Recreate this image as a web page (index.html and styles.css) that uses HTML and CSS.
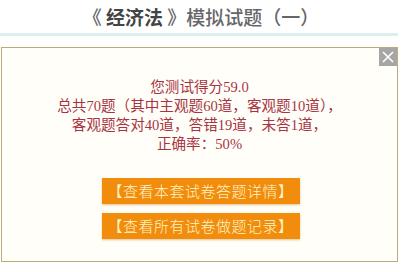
FILE: index.html
```html
<!DOCTYPE html>
<html>
<head>
  <meta charset="UTF-8" />
  <title>经济法模拟试题</title>
  <link rel="stylesheet" href="styles.css">
</head>
<body>
  <div class="page">
    <h1 class="title">《 <b>经济法</b> 》模拟试题（一）</h1>

    <div class="dialog">
      <span class="close">
        <svg width="14" height="14" viewBox="0 0 14 14">
          <path d="M2 2 L12 12 M12 2 L2 12" stroke="#fff" stroke-width="1.6" />
        </svg>
      </span>
      <div class="result">
        <p>您测试得分59.0</p>
        <p>总共70题（其中主观题60道，客观题10道），</p>
        <p>客观题答对40道，答错19道，未答1道，</p>
        <p>正确率：50%</p>
      </div>
      <div class="actions">
        <a class="button">【查看本套试卷答题详情】</a>
        <a class="button">【查看所有试卷做题记录】</a>
      </div>
    </div>
  </div>
</body>
</html>
```

FILE: styles.css
```css
body {
  margin: 0;
  background-color: #fff;
  font-family: "Liberation Serif", "Noto Sans CJK SC", serif;
}
.page {
  width: 402px;
  height: 272px;
  overflow: hidden;
}
.title {
  margin: 0 4px 0 0;
  height: 33px;
  line-height: 33px;
  padding-left: 4px;
  text-align: center;
  font-family: "Noto Sans CJK SC", sans-serif;
  font-size: 19px;
  font-weight: 500;
  color: #666;
  border-bottom: 3px solid #dcefef;
}
.title b {
  color: #444;
  font-weight: 700;
}
.dialog {
  position: relative;
  margin: 11px 4px 0 1px;
  height: 213px;
  border: 1px solid #bcaa7a;
  background-color: #fffef9;
}
.close {
  position: absolute;
  top: 0;
  right: 0;
  width: 18px;
  height: 18px;
  background-color: #a6a6a6;
  display: flex;
  align-items: center;
  justify-content: center;
}
.result {
  padding-top: 30px;
  text-align: center;
  color: #a83442;
  font-size: 14.6px;
  line-height: 19px;
}
.result p {
  margin: 0;
}
.actions {
  margin-top: 24px;
  display: flex;
  flex-direction: column;
  align-items: center;
  gap: 9px;
}
.button {
  display: block;
  width: 198px;
  height: 26px;
  line-height: 26px;
  text-align: center;
  background-color: #f18c0c;
  color: #fff4c4;
  font-family: "Noto Sans CJK SC", sans-serif;
  font-size: 15px;
  font-weight: 300;
  letter-spacing: 0.5px;
  box-shadow: 0 1px 2px rgba(200, 140, 40, 0.5);
  margin-left: 2px;
}
```
